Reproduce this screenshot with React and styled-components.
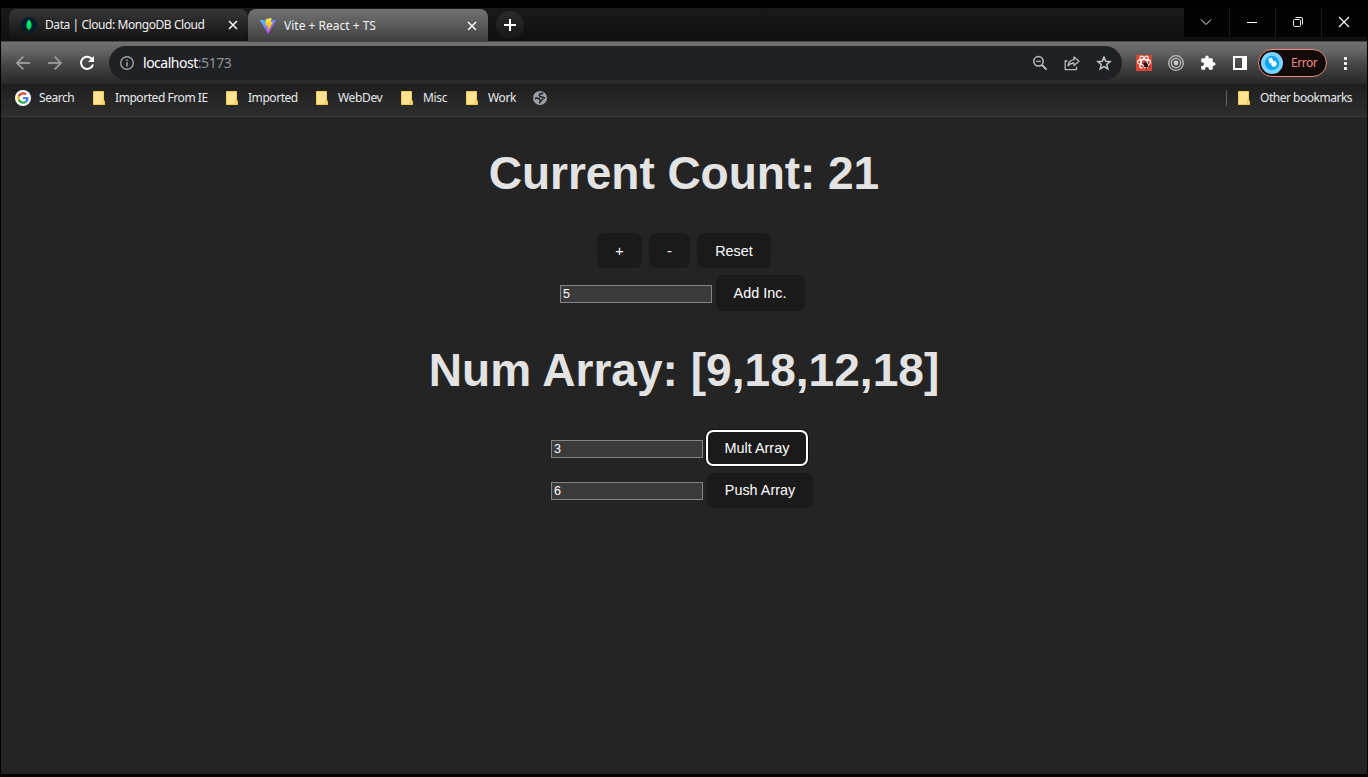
import React from "react";
import styled, { createGlobalStyle, css } from "styled-components";

const GlobalStyle = createGlobalStyle`
  * { box-sizing: border-box; }
  html, body { margin: 0; background: #000; overflow: hidden; }
  svg { display: block; flex: none; }
`;

const uiFont = css`
  font-family: "Noto Sans", "Open Sans", sans-serif;
  font-size: 12px;
`;

const Window = styled.div`
  width: 1368px;
  height: 777px;
  padding: 8px 1px 3px;
  background: #000;
  display: flex;
  flex-direction: column;
`;

const TabStrip = styled.div`
  height: 34px;
  flex: none;
  display: flex;
  align-items: flex-start;
  padding: 1px 0 0 8px;
  background: linear-gradient(#191919, #101010);
  border-bottom: 1px solid #484848;
`;

const Tab = styled.div`
  ${uiFont}
  width: ${(p) => p.$width}px;
  height: ${(p) => (p.$active ? 33 : 32)}px;
  padding: 0 ${(p) => (p.$active ? 8 : 7)}px 0 12px;
  display: flex;
  align-items: center;
  color: ${(p) => (p.$active ? "#f4f4f4" : "#f0f0f0")};
  border-radius: ${(p) => (p.$active ? "8px 8px 0 0" : "8px")};
  background: ${(p) =>
    p.$active
      ? "linear-gradient(#727272, #595959 50%, #3e3e3e)"
      : "linear-gradient(#383838, #232323 50%, #121212)"};
`;

const Text = styled.span`
  display: block;
  white-space: nowrap;
  line-height: 16px;
  width: ${(p) => p.$w}px;
  letter-spacing: ${(p) => p.$ls || 0}px;
`;

const TabTitle = styled(Text)`
  margin-left: 8px;
  margin-right: auto;
`;

const NewTab = styled.div`
  width: 28px;
  height: 28px;
  margin: 2px 0 0 8px;
  border-radius: 50%;
  background: linear-gradient(#2a2a2a, #181818);
  display: grid;
  place-items: center;
`;

const WindowControls = styled.div`
  margin: -1px 0 0 auto;
  display: flex;
  gap: 1px;
  height: 29px;
  background: #1c1c1c;
`;

const WindowButton = styled.div`
  width: 45px;
  padding: 0 2px 1px 0;
  background: #020202;
  display: grid;
  place-items: center;
`;

const Toolbar = styled.div`
  height: 42px;
  flex: none;
  display: flex;
  align-items: center;
  padding: 0 12px;
  background: linear-gradient(#727272, #616161 25%, #505050 42%, #414141 60%, #2b2b2b 95%, #282828);
`;

const NavButtons = styled.div`
  display: flex;
  gap: 12px;
  width: 96px;
`;

const AddressBar = styled.div`
  width: 1013px;
  height: 34px;
  border-radius: 17px;
  background: #202124;
  display: flex;
  align-items: center;
  padding: 0 8px;
`;

const Url = styled.div`
  font-family: "Noto Sans", "Open Sans", sans-serif;
  font-size: 14px;
  letter-spacing: -0.48px;
  line-height: 20px;
  margin: 0 auto 0 6px;
  color: #fff;
  white-space: nowrap;
  span { color: #8d9196; }
`;

const AddressActions = styled.div`
  display: flex;
  gap: 12px;
`;

const Extensions = styled.div`
  display: flex;
  align-items: center;
  gap: 12px;
  margin-left: 12px;
`;

const Profile = styled.div`
  ${uiFont}
  width: 69px;
  height: 28px;
  margin-left: 8px;
  padding-left: 2px;
  border: 1px solid #ee8a82;
  border-radius: 14px;
  background: #120a09;
  color: #f28b82;
  display: flex;
  align-items: center;
  gap: 8px;
`;

const MenuSlot = styled.div`
  margin-left: auto;
`;

const Bookmarks = styled.div`
  ${uiFont}
  height: 33px;
  flex: none;
  display: flex;
  align-items: center;
  gap: 16px;
  padding: 0 14px 4px;
  color: #e9eaec;
  background: linear-gradient(#1d1d1d, #272727 50%, #2d2d2d);
  border-bottom: 1px solid #3c3c3c;
`;

const Bookmark = styled.div`
  display: flex;
  align-items: center;
  gap: 8px;
`;

const OtherBookmarks = styled.div`
  margin-left: auto;
  padding-left: 9px;
  border-left: 1px solid #626262;
`;

const Page = styled.main`
  flex: 1;
  min-height: 0;
  background: #242424;
  display: flex;
  flex-direction: column;
  align-items: center;
  font-family: "Liberation Sans", Arial, sans-serif;
`;

const Heading = styled.h1`
  margin: 30.9px 0;
  font-size: 46.08px;
  line-height: 50.7px;
  font-weight: 700;
  color: #e3e3e3;
  white-space: nowrap;
  letter-spacing: ${(p) => p.$ls || 0}px;
`;

const Controls = styled.div`
  display: flex;
  flex-direction: column;
  align-items: ${(p) => p.$align || "center"};
`;

const ControlRow = styled.div`
  display: flex;
  align-items: baseline;
`;

const Button = styled.button`
  font: 500 14.4px/16px "Liberation Sans", Arial, sans-serif;
  height: 35.2px;
  margin: 3.6px;
  padding: 0 17.1px;
  border: 1px solid transparent;
  border-radius: 7.2px;
  background: #1a1a1a;
  color: #fff;
  white-space: nowrap;
  ${(p) =>
    p.$focused &&
    css`
      outline: none;
      border: 2px solid #fff;
      height: 36px;
      margin: 3.2px 3.6px 3.2px 3.1px;
      padding: 0 16.4px;
      box-shadow: 0 0 0 1px #101010;
    `}
`;

const NumberField = styled.input`
  width: 152px;
  height: 18px;
  padding: 0 2px;
  border: 1px solid #858585;
  border-radius: 0;
  background: #3b3b3b;
  color: #fff;
  font: 12.6px "Liberation Sans", Arial, sans-serif;
  outline: none;
`;

const Icon = ({ size = 20, box = 20, children, ...rest }) => (
  <svg width={size} height={size} viewBox={`0 0 ${box} ${box}`} fill="none" {...rest}>
    {children}
  </svg>
);

const MongoIcon = () => (
  <Icon size={16} box={16}>
    <circle cx="8" cy="8" r="8" fill="#061e2b" />
    <path d="M8 2.500C9.600 4.200 10.500 5.900 10.500 8.200c0 2.200-1 3.500-2.200 4.300L8.200 13.500h-.5l-.2-1C6.300 11.700 5.400 10.300 5.400 8.200 5.400 5.900 6.500 4.200 8 2.500z" fill="#00ed64" />
    <path d="M8 8v5" stroke="#07964a" strokeWidth=".5" />
  </Icon>
);

const ViteIcon = () => (
  <Icon size={16} box={256}>
    <defs>
      <linearGradient id="viteBody" x1="0" y1="0" x2=".6" y2="1">
        <stop offset="0" stopColor="#41d1ff" />
        <stop offset="1" stopColor="#bd34fe" />
      </linearGradient>
      <linearGradient id="viteBolt" x1=".4" y1="0" x2=".6" y2="1">
        <stop offset="0" stopColor="#ffea83" />
        <stop offset=".2" stopColor="#ffdd35" />
        <stop offset="1" stopColor="#ffa800" />
      </linearGradient>
    </defs>
    <path fill="url(#viteBody)" d="M255.200 37.900L134.900 253c-2.500 4.400-8.900 4.500-11.400 0L.9 37.900c-2.700-4.800 1.400-10.600 6.800-9.600l120.400 21.500c.8.1 1.600.1 2.300 0L248.200 28.300c5.400-1 9.600 4.800 7 9.600z" />
    <path fill="url(#viteBolt)" d="M185.400 0L96.400 17.500a3.300 3.300 0 0 0-2.600 3l-5.500 92.500a3.300 3.300 0 0 0 4 3.400l24.800-5.700c2.300-.5 4.400 1.500 3.900 3.900l-7.400 36c-.5 2.400 1.800 4.500 4.100 3.800l15.300-4.700c2.400-.7 4.600 1.400 4.100 3.900l-11.700 56.600c-.7 3.500 4 5.500 5.900 2.500L204 67.400c1.200-2.400-.8-5.100-3.500-4.600l-25.800 5a3.300 3.300 0 0 1-3.800-4.200l16.800-58.400c.7-2.400-1.400-4.700-3.800-4.200z" />
  </Icon>
);

const CloseIcon = () => (
  <Icon size={16} box={16} stroke="#f2f2f2" strokeWidth="1.600">
    <path d="M4 4l8 8M12 4l-8 8" />
  </Icon>
);

const FolderIcon = () => (
  <Icon size={16} box={16}>
    <path d="M2.500 1.500h10V11h1v3.500h-11z" fill="#ffe38f" stroke="#f1cd54" />
    <path d="M11.500 14.500V11h2v3.500z" fill="#ffe38f" stroke="#e7bf3f" strokeWidth=".8" />
  </Icon>
);

const GoogleIcon = () => (
  <Icon size={16} box={16}>
    <circle cx="8" cy="8" r="8" fill="#fff" />
    <g transform="translate(2.200 2.200) scale(.2417)">
      <path fill="#4285f4" d="M46.980 24.550c0-1.570-.15-3.090-.38-4.550H24v9.020h12.940c-.58 2.960-2.260 5.480-4.780 7.180l7.730 6c4.510-4.180 7.090-10.360 7.090-17.650z" />
      <path fill="#34a853" d="M24 48c6.480 0 11.930-2.130 15.890-5.810l-7.730-6c-2.150 1.450-4.920 2.300-8.160 2.300-6.260 0-11.570-4.220-13.470-9.910l-7.980 6.190C6.510 42.620 14.620 48 24 48z" />
      <path fill="#fbbc05" d="M10.530 28.590c-.48-1.450-.76-2.990-.76-4.590s.27-3.140.76-4.590l-7.980-6.190C.92 16.460 0 20.120 0 24c0 3.880.92 7.540 2.560 10.780z" />
      <path fill="#ea4335" d="M24 9.500c3.540 0 6.710 1.220 9.210 3.600l6.850-6.850C35.900 2.380 30.470 0 24 0 14.620 0 6.510 5.380 2.560 13.220l7.980 6.190C12.430 13.720 17.740 9.500 24 9.500z" />
    </g>
  </Icon>
);

const GlobeIcon = () => (
  <Icon size={16} box={16}>
    <circle cx="8" cy="8" r="7" fill="#9aa0a6" />
    <path
      d="M11.300 3.600C9 3 7 4 7.300 5.700c.2 1.300 1.600 1.100 2.900 1.300 1.100.200 1.500 1 2.900.9M2.700 8.300c1.600-.3 3.200-.3 4.300.2 1.300.6.200 1.900 1.400 2.200.8.200.3 1.700-1.400 2.300M9.300 10.200c.9 0 1.300-.7 1.400-1.600"
      stroke="#272727"
      strokeWidth="1.700"
    />
  </Icon>
);

const BackIcon = () => (
  <Icon stroke="#969696" strokeWidth="2">
    <path d="M17 10H4M10.300 3.600L4 10l6.300 6.400" />
  </Icon>
);

const ForwardIcon = () => (
  <Icon stroke="#969696" strokeWidth="2">
    <path d="M3 10h13M9.700 3.600L16 10l-6.300 6.400" />
  </Icon>
);

const ReloadIcon = () => (
  <Icon>
    <path d="M15.300 6.600A6.100 6.100 0 1 0 16 11.400" stroke="#fff" strokeWidth="2" />
    <path d="M17 3v6h-6z" fill="#fff" />
  </Icon>
);

const InfoIcon = () => (
  <Icon>
    <circle cx="10" cy="10" r="6.300" stroke="#9aa0a6" strokeWidth="1.400" />
    <path d="M10 9v4.500M10 6.400v1.600" stroke="#9aa0a6" strokeWidth="1.600" />
  </Icon>
);

const ZoomOutIcon = () => (
  <Icon stroke="#c0c3c7">
    <circle cx="8.500" cy="8.300" r="4.700" strokeWidth="1.500" />
    <path d="M12 12l4.600 4.600" strokeWidth="1.800" />
    <path d="M6.300 8.300h4.400" strokeWidth="1.200" />
  </Icon>
);

const ShareIcon = () => (
  <Icon stroke="#b6b9bd" strokeWidth="1.300">
    <path d="M5.500 8h-2.300v8.700h11.300v-3" />
    <path d="M12 4l5 4.300-5 4.300V10c-2.800 0-4.600.9-6 2.800.4-3.300 2.300-5.700 6-6.100z" strokeLinejoin="round" />
  </Icon>
);

const StarIcon = () => (
  <Icon stroke="#c3c6ca" strokeWidth="1.500">
    <path d="M10 4.200l1.750 4.050 4.350.4-3.300 2.900 1 4.300L10 13.600l-3.800 2.250 1-4.300-3.300-2.900 4.350-.4z" />
  </Icon>
);

const ReactBugIcon = () => (
  <Icon>
    <rect x="2" y="2" width="16" height="16" fill="#dc4331" />
    <g stroke="#fff" strokeWidth="1.200">
      <ellipse cx="10" cy="9" rx="6.600" ry="2.600" />
      <ellipse cx="10" cy="9" rx="6.600" ry="2.600" transform="rotate(60 10 9)" />
      <ellipse cx="10" cy="9" rx="6.600" ry="2.600" transform="rotate(120 10 9)" />
    </g>
    <ellipse cx="11.800" cy="12" rx="1.900" ry="2.800" fill="#2b1310" transform="rotate(-35 11.800 12)" />
    <path d="M8 10.500l3 1M12 8l.5 3M8.500 14.500l3-1.500M15.500 10l-2.500 1.500M16 14.500l-3-1.500M12.500 16.500v-3" stroke="#2b1310" strokeWidth=".8" />
  </Icon>
);

const TargetIcon = () => (
  <Icon stroke="#bdbdbd">
    <circle cx="10" cy="10" r="7.300" strokeWidth="1.300" />
    <circle cx="10" cy="10" r="4.700" strokeWidth="1.300" />
    <circle cx="10" cy="10" r="2.400" fill="#c9c9c9" stroke="none" />
  </Icon>
);

const PuzzleIcon = () => (
  <Icon box={24}>
    <path transform="translate(2.200 2.200) scale(.82)" d="M20.500 11H19V7c0-1.100-.9-2-2-2h-4V3.500a2.500 2.500 0 0 0-5 0V5H4c-1.100 0-2 .9-2 2v3.800h1.500c1.500 0 2.700 1.200 2.700 2.700S5 16.200 3.500 16.200H2V20c0 1.100.9 2 2 2h3.800v-1.500c0-1.500 1.200-2.700 2.700-2.700s2.700 1.200 2.700 2.700V22H17c1.100 0 2-.9 2-2v-4h1.500a2.500 2.500 0 0 0 0-5z" fill="#fff" />
  </Icon>
);

const SidePanelIcon = () => (
  <Icon>
    <path fillRule="evenodd" d="M3 3h14v14H3zM5 5v10h7V5z" fill="#fff" />
  </Icon>
);

const AvatarIcon = () => (
  <Icon size={22} box={22}>
    <circle cx="11" cy="11" r="11" fill="#7bd3ff" />
    <circle cx="11" cy="11" r="7.200" fill="#0aa5f5" />
    <path d="M7.300 6.500l3.600-.8 1.300 2.800-.6 2.200-3 .8zM10.600 10l3.400-1.500 2 3.600-2 2.700-2.900-.4-1-2.200z" fill="#fff" />
  </Icon>
);

const DotsIcon = () => (
  <Icon>
    <g fill="#fff">
      <rect x="9" y="4" width="3" height="3" rx="1" />
      <rect x="9" y="9" width="3" height="3" rx="1" />
      <rect x="9" y="14" width="3" height="3" rx="1" />
    </g>
  </Icon>
);

const bookmarks = [
  { label: "Search", w: 36, ls: -0.45, icon: <GoogleIcon /> },
  { label: "Imported From IE", w: 93, ls: -0.44 },
  { label: "Imported", w: 50, ls: -0.45 },
  { label: "WebDev", w: 45, ls: -0.35 },
  { label: "Misc", w: 25, ls: -0.35 },
  { label: "Work", w: 28, ls: -0.35 },
];

export default function App() {
  return (
    <>
      <GlobalStyle />
      <Window>
        <TabStrip>
          <Tab $width={239}>
            <MongoIcon />
            <TabTitle $w={160} $ls={-0.43}>Data | Cloud: MongoDB Cloud</TabTitle>
            <CloseIcon />
          </Tab>
          <Tab $active $width={240}>
            <ViteIcon />
            <TabTitle $w={93} $ls={0}>Vite + React + TS</TabTitle>
            <CloseIcon />
          </Tab>
          <NewTab>
            <Icon size={14} box={14} stroke="#fff" strokeWidth="2">
              <path d="M7 1v12M1 7h12" />
            </Icon>
          </NewTab>
          <WindowControls>
            <WindowButton>
              <Icon size={12} box={12} stroke="#eee">
                <path d="M1 3.500l5 5 5-5" />
              </Icon>
            </WindowButton>
            <WindowButton>
              <Icon size={12} box={12} stroke="#fff">
                <path d="M1 6.500h10" />
              </Icon>
            </WindowButton>
            <WindowButton>
              <Icon size={12} box={12} stroke="#eee">
                <rect x="1.500" y="3.500" width="7" height="7" rx="1.200" />
                <path d="M3.500 1.500H9a1.500 1.500 0 0 1 1.500 1.500v5.500" />
              </Icon>
            </WindowButton>
            <WindowButton>
              <Icon size={12} box={12} stroke="#fff" strokeWidth="1.200">
                <path d="M1 1l10 10M11 1L1 11" />
              </Icon>
            </WindowButton>
          </WindowControls>
        </TabStrip>
        <Toolbar>
          <NavButtons>
            <BackIcon />
            <ForwardIcon />
            <ReloadIcon />
          </NavButtons>
          <AddressBar>
            <InfoIcon />
            <Url>localhost<span>:5173</span></Url>
            <AddressActions>
              <ZoomOutIcon />
              <ShareIcon />
              <StarIcon />
            </AddressActions>
          </AddressBar>
          <Extensions>
            <ReactBugIcon />
            <TargetIcon />
            <PuzzleIcon />
            <SidePanelIcon />
          </Extensions>
          <Profile>
            <AvatarIcon />
            <Text $w={27} $ls={-0.45}>Error</Text>
          </Profile>
          <MenuSlot>
            <DotsIcon />
          </MenuSlot>
        </Toolbar>
        <Bookmarks>
          {bookmarks.map((b) => (
            <Bookmark key={b.label}>
              {b.icon || <FolderIcon />}
              <Text $w={b.w} $ls={b.ls}>{b.label}</Text>
            </Bookmark>
          ))}
          <GlobeIcon />
          <OtherBookmarks>
            <Bookmark>
              <FolderIcon />
              <Text $w={93} $ls={-0.48}>Other bookmarks</Text>
            </Bookmark>
          </OtherBookmarks>
        </Bookmarks>
        <Page>
          <Heading $ls={-0.08}>Current Count: 21</Heading>
          <Controls>
            <ControlRow>
              <Button>+</Button>
              <Button>-</Button>
              <Button>Reset</Button>
            </ControlRow>
            <ControlRow>
              <NumberField defaultValue="5" />
              <Button>Add Inc.</Button>
            </ControlRow>
          </Controls>
          <Heading>Num Array: [9,18,12,18]</Heading>
          <Controls $align="flex-start">
            <ControlRow>
              <NumberField defaultValue="3" />
              <Button $focused>Mult Array</Button>
            </ControlRow>
            <ControlRow>
              <NumberField defaultValue="6" />
              <Button>Push Array</Button>
            </ControlRow>
          </Controls>
        </Page>
      </Window>
    </>
  );
}
